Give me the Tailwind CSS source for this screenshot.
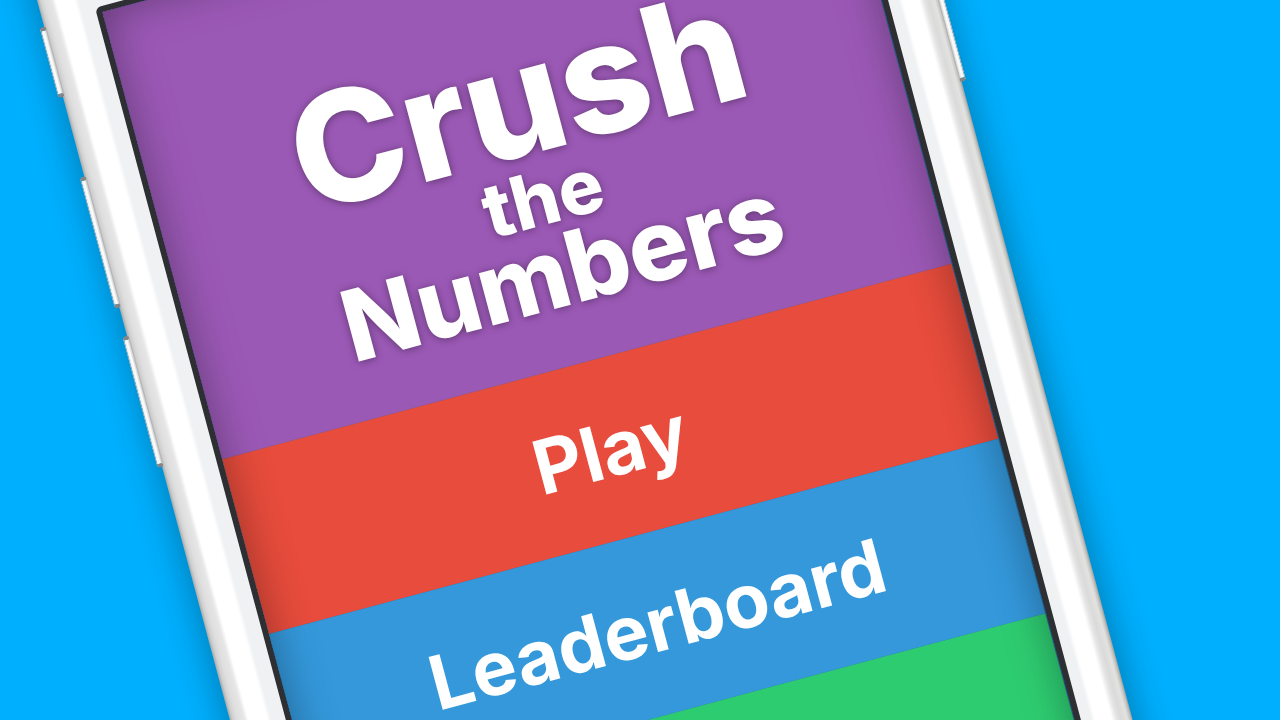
<!DOCTYPE html>
<html lang="en">
<head>
<meta charset="utf-8">
<meta name="viewport" content="width=device-width, initial-scale=1">
<title>Crush the Numbers</title>
<script src="https://cdn.jsdelivr.net/npm/@tailwindcss/browser@4"></script>
</head>
<body class="bg-[#00b0ff] font-['Inter','Liberation_Sans',sans-serif] font-bold text-white">
<main class="relative h-screen overflow-hidden">
  <!-- Phone, tilted on the backdrop -->
  <div class="absolute -top-[127px] left-[3px] w-[872px] origin-top-left -rotate-15">
    <!-- Shell -->
    <div class="rounded-[110px] bg-[linear-gradient(to_right,#a9a9a9_0px,#cfcfcf_3px,#dedede_7px,#e6e6e6_14px,#ffffff_18px,#ffffff_36px,#eff1f3_40px,#eff1f3_54px,#eff1f3_822px,#eff1f3_832px,#ffffff_836px,#ffffff_852px,#e4e4e4_857px,#dadada_861px,#e2e2e0_867px,#c4c4c2_870px,#9c9c9c_872px)] pt-[154px] pr-[50px] pb-[154px] pl-[54px] shadow-[0_0_40px_rgba(0,0,0,0.35)]">
      <div class="relative rounded-md border-6 border-[#2d2f33] bg-[#2c6aa0]">
        <section class="flex flex-col pr-px">
          <header class="h-[463px] bg-[#9b59b6] pt-[132px] text-center">
            <h1 class="flex flex-col font-extrabold text-shadow-[0_1px_8px_rgba(0,0,0,0.4)]">
              <span class="text-[154px] leading-[120px]">Crush</span>
              <span class="text-[75px] leading-[82px]">the</span>
              <span class="text-[99px] leading-[68px]">Numbers</span>
            </h1>
          </header>
          <button type="button" class="h-[181px] bg-[#e74c3c] text-[75px] leading-none">Play</button>
          <button type="button" class="h-[181px] bg-[#3498db] text-[75px] leading-none">Leaderboard</button>
          <div class="h-[520px] bg-[#2ecc71]"></div>
        </section>
        <!-- Shade cast by the bezel onto the glass -->
        <div class="pointer-events-none absolute inset-0 shadow-[inset_0_0_44px_rgba(0,0,0,0.35)]"></div>
      </div>
    </div>
    <!-- Side keys -->
    <span class="absolute top-[159px] -left-[5px] h-[73px] w-[7px] rounded-sm border border-[#b5b5b5] border-y-4 border-y-[#858585] bg-linear-to-r from-[#e8e8e8] via-white to-[#cccccc]"></span>
    <span class="absolute top-[314px] -left-[5px] h-[136px] w-[7px] rounded-sm border border-[#b5b5b5] border-y-4 border-y-[#858585] bg-linear-to-r from-[#e8e8e8] via-white to-[#cccccc]"></span>
    <span class="absolute top-[479px] -left-[5px] h-[136px] w-[7px] rounded-sm border border-[#b5b5b5] border-y-4 border-y-[#858585] bg-linear-to-r from-[#e8e8e8] via-white to-[#cccccc]"></span>
    <span class="absolute top-[314px] -right-[5px] h-[136px] w-[7px] rounded-sm border border-[#b5b5b5] border-b-4 border-b-[#858585] bg-linear-to-r from-[#cccccc] via-white to-[#e8e8e8]"></span>
  </div>
</main>
</body>
</html>
